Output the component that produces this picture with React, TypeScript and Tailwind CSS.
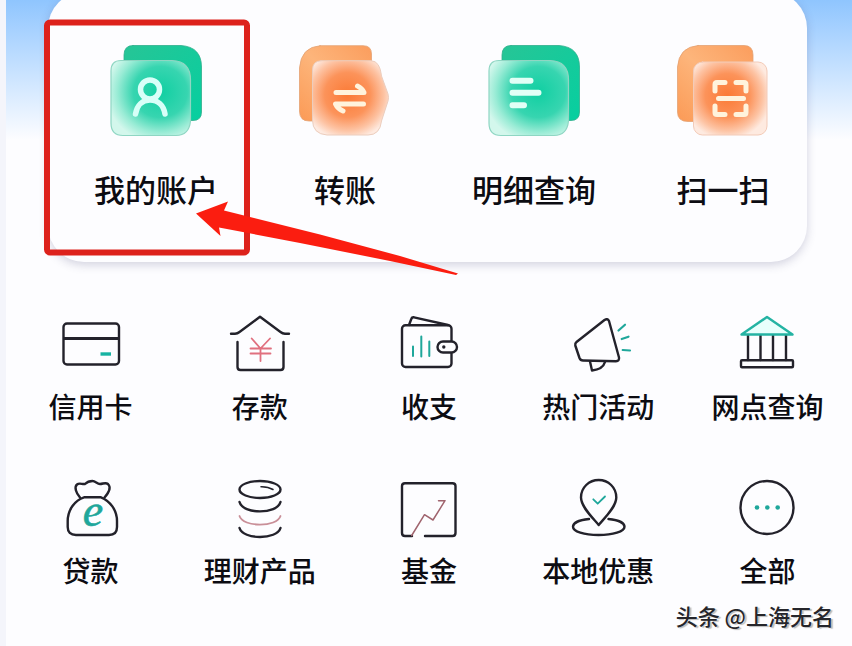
import type { ReactNode } from "react"

interface Entry {
  label: string
  icon: ReactNode
}

const INK = "#23222b"
const TEAL = "#1fa79b"
const PINK = "#e0707f"

function Gradients() {
  return (
    <svg className="absolute h-0 w-0" aria-hidden="true">
      <defs>
        <linearGradient id="greenBack" x1="0" y1="0" x2="1" y2="1">
          <stop offset="0" stopColor="#27c596" />
          <stop offset="1" stopColor="#06cfa0" />
        </linearGradient>
        <radialGradient id="greenGlass" cx="0.62" cy="0.42" r="0.68">
          <stop offset="0" stopColor="#10cfa2" />
          <stop offset="0.5" stopColor="#37d5b0" />
          <stop offset="0.8" stopColor="#9becd6" />
          <stop offset="1" stopColor="#d3f7ec" />
        </radialGradient>
        <linearGradient id="orangeBack" x1="0" y1="1" x2="1" y2="0">
          <stop offset="0" stopColor="#fb9a56" />
          <stop offset="0.5" stopColor="#fdb57b" />
          <stop offset="1" stopColor="#fb9d5d" />
        </linearGradient>
        <radialGradient id="orangeGlass" cx="0.46" cy="0.46" r="0.6">
          <stop offset="0" stopColor="#fb7a35" />
          <stop offset="0.5" stopColor="#fc935a" />
          <stop offset="0.8" stopColor="#fdc3a3" />
          <stop offset="1" stopColor="#feeae0" />
        </radialGradient>
      </defs>
    </svg>
  )
}

function TileIcon({ children }: { children: ReactNode }) {
  return (
    <svg
      viewBox="0 0 96 96"
      className="h-24 w-24"
      fill="none"
      strokeLinecap="round"
      strokeLinejoin="round"
      aria-hidden="true"
    >
      {children}
    </svg>
  )
}

function LineIcon({ children }: { children: ReactNode }) {
  return (
    <svg
      viewBox="0 0 64 64"
      className="h-16 w-16 overflow-visible"
      fill="none"
      stroke={INK}
      strokeWidth="2.4"
      strokeLinecap="round"
      strokeLinejoin="round"
      aria-hidden="true"
    >
      {children}
    </svg>
  )
}

function GreenTile({ children }: { children: ReactNode }) {
  return (
    <TileIcon>
      <path
        d="M25 2.5H73Q93.5 4 93.5 24V69Q93.5 77.5 85 77.5H25Q16 77.5 16 68V12Q16 2.5 25 2.5Z"
        fill="url(#greenBack)"
        stroke="#2fae8c"
        strokeWidth="0.8"
      />
      <path
        d="M13 17.5H64Q82.5 18 82.5 37V78Q81 92.5 68 92.5H15Q3 92.5 3 80V28Q3 17.5 13 17.5Z"
        fill="url(#greenGlass)"
        stroke="#8fd6c3"
        strokeWidth="1.2"
      />
      {children}
    </TileIcon>
  )
}

const services: Entry[] = [
  {
    label: "我的账户",
    icon: (
      <GreenTile>
        <g stroke="#d8fff8" strokeWidth="5.5">
          <circle cx="42" cy="46.5" r="9.5" />
          <path d="M27.5 71C29 62 34.5 57 42 57S55.5 62 57 71" />
        </g>
      </GreenTile>
    ),
  },
  {
    label: "转账",
    icon: (
      <TileIcon>
        <path
          d="M23 2.7H66Q74.5 2.7 74.5 11V78H12Q2.5 78 2.5 68V25Q4 4 23 2.7Z"
          fill="url(#orangeBack)"
          stroke="#e3a273"
          strokeWidth="0.8"
        />
        <path
          d="M24 17.7H74Q83 18 84.5 33L91 51Q92 54.5 91 58L84.5 78Q83 92 71 92H30Q15.5 91 15.5 77V27Q15.5 18 24 17.7Z"
          fill="url(#orangeGlass)"
          stroke="#eccdbd"
          strokeWidth="1"
        />
        <path
          d="M39 49.5H67Q65 45 60.5 43M66.500 61H38.500Q40.500 65.500 46 68"
          stroke="#fff3dc"
          strokeWidth="5"
        />
      </TileIcon>
    ),
  },
  {
    label: "明细查询",
    icon: (
      <GreenTile>
        <path
          d="M26.5 37.7H44.5M26.5 49.7H52.5M26.5 62.3H38"
          stroke="#e2fff6"
          strokeWidth="6"
        />
      </GreenTile>
    ),
  },
  {
    label: "扫一扫",
    icon: (
      <TileIcon>
        <path
          d="M23 2.5H69Q78 2.5 78 12V78.5H13Q2.5 78.5 2.5 69V24Q4 4 23 2.5Z"
          fill="url(#orangeBack)"
          stroke="#e3a273"
          strokeWidth="0.8"
        />
        <rect
          x="18.5"
          y="19"
          width="73.5"
          height="73"
          rx="9"
          fill="url(#orangeGlass)"
          stroke="#f3cbb8"
          strokeWidth="1"
        />
        <path
          d="M50 39.5H42Q40 39.5 40 41.5V48M61 39.5H69Q71 39.5 71 41.5V48M40 63V69.5Q40 71.5 42 71.5H50M71 63V69.5Q71 71.5 69 71.5H61M43.5 55.5H68.5"
          stroke="#fff3dc"
          strokeWidth="5"
        />
      </TileIcon>
    ),
  },
]

const products: Entry[] = [
  {
    label: "信用卡",
    icon: (
      <LineIcon>
        <rect x="4.5" y="11.5" width="55.5" height="41" rx="3.5" />
        <path d="M4.5 26.5H60" strokeWidth="3" strokeLinecap="butt" />
        <path d="M41.5 42H52" stroke="#17b3a3" strokeWidth="3.4" strokeLinecap="butt" />
      </LineIcon>
    ),
  },
  {
    label: "存款",
    icon: (
      <LineIcon>
        <path d="M3 21.7H7Q9.5 21.7 11.5 20L32 4.7L52.5 20Q54.5 21.7 57 21.7H61" />
        <path d="M9.5 30V55Q9.5 58 12.5 58H52.5Q55.5 58 55.5 55V30" />
        <path
          d="M23.7 26.5L32.5 36.5L42 26.5M22.5 36.5H43M22.5 41.5H42.5M32.5 36.5V49"
          stroke={PINK}
          strokeWidth="1.8"
        />
      </LineIcon>
    ),
  },
  {
    label: "收支",
    icon: (
      <LineIcon>
        <path d="M12 13L14.5 6.5Q15 5 17 5.3L51 13" />
        <rect x="5" y="13.3" width="49.5" height="41.7" rx="3.5" />
        <rect x="40.5" y="29.5" width="19.5" height="11" rx="5.5" fill="#fdfdff" />
        <circle cx="46.8" cy="35" r="1.7" fill={INK} stroke="none" />
        <path d="M16 34.5V44M24.3 24.5V44.5M32.3 29.5V44" stroke={TEAL} strokeWidth="2" />
      </LineIcon>
    ),
  },
  {
    label: "热门活动",
    icon: (
      <LineIcon>
        <path d="M10.5 30L38.5 8Q41.5 6 43 9L53 45.5Q53.5 49.3 50 49.3L17 48.5Q14.5 48.5 13.5 46L9.3 33.5Q8.8 31.3 10.5 30Z" />
        <path d="M24 49.5L26 58.5C31 58 37 57 39 50" />
        <path
          d="M52.5 18.5L59 12.7M55.7 27L62.5 24.7M56.7 38L64 38.5"
          stroke={TEAL}
          strokeWidth="2.2"
        />
      </LineIcon>
    ),
  },
  {
    label: "网点查询",
    icon: (
      <LineIcon>
        <path d="M13 23V48M25.5 23V48M38 23V48M51 23V48" />
        <rect x="6" y="48.3" width="52" height="7" rx="1" />
        <path d="M6.5 22.5L32 5L57.5 22.5Z" stroke="#24b3a3" fill="#e8fffc" />
      </LineIcon>
    ),
  },
  {
    label: "贷款",
    icon: (
      <LineIcon>
        <path d="M21 21.5C17 17 15 11 18 8.5C20.5 6.5 23 8.5 26 8C28.5 5.5 30.5 5 33.5 5C36.5 5 38 8 41 8C44 8 46.5 6 49 8C52.5 11.5 49 17.5 45.5 21.5" />
        <path d="M25 21.3H42C51 25 58 34 58 45V51Q58 59 50 59H17Q8.7 59 8.7 51V45C8.7 34 16 24 25 21.3Z" />
        <text
          x="34"
          y="50"
          textAnchor="middle"
          fill={TEAL}
          stroke={TEAL}
          strokeWidth="0.6"
          className="font-['Liberation_Serif',serif] text-[46px] italic"
        >
          e
        </text>
      </LineIcon>
    ),
  },
  {
    label: "理财产品",
    icon: (
      <LineIcon>
        <ellipse cx="32" cy="13.5" rx="20.5" ry="8.5" />
        <path d="M33 10.7Q40 10.5 45 13.5" strokeWidth="1.5" />
        <path d="M11.5 26C15 38.5 49 38.5 52.5 26M11.5 52C15 64 49 64 52.5 52" />
        <path d="M11.5 40C15 51.5 49 51.5 52.5 40" stroke="#c98f98" strokeWidth="1.8" />
      </LineIcon>
    ),
  },
  {
    label: "基金",
    icon: (
      <LineIcon>
        <path d="M15 60H8Q5 60 5 57V10Q5 7.3 8 7.3H55.5Q58.5 7.3 58.5 10V57Q58.5 60 55.5 60H28" />
        <path
          d="M14.7 59.5L27.5 38.7L36 44L48 24.7H41.5"
          stroke="#a0646e"
          strokeWidth="1.5"
        />
      </LineIcon>
    ),
  },
  {
    label: "本地优惠",
    icon: (
      <LineIcon>
        <path d="M23 43C13 44 7 47 7 50.7C7 55.5 18 59 32.5 59S58.5 55.5 58.5 50.7C58.5 47 52.5 44 42.5 43" />
        <path d="M32.7 49C27 42 15 31 15 21.5C15 11.5 23 4 32.7 4S50.3 11.5 50.3 21.5C50.3 31 38.5 42 32.7 49Z" />
        <path d="M27.3 23.3L31.7 27.7L39 20.5" stroke={TEAL} strokeWidth="1.8" />
      </LineIcon>
    ),
  },
  {
    label: "全部",
    icon: (
      <LineIcon>
        <circle cx="32" cy="31.5" r="26.5" />
        <g fill={TEAL} stroke="none">
          <circle cx="22" cy="31.5" r="2.3" />
          <circle cx="32.3" cy="31.5" r="2.3" />
          <circle cx="42.7" cy="31.5" r="2.3" />
        </g>
      </LineIcon>
    ),
  },
]

// Red frame and arrow pointing at the first service
function Callout() {
  return (
    <svg
      width="480"
      height="290"
      viewBox="6 0 480 290"
      className="pointer-events-none absolute left-0 top-0"
      aria-hidden="true"
    >
      <rect x="47" y="22.5" width="200" height="230" rx="3" fill="none" stroke="#dd221c" strokeWidth="6" />
      <path
        d="M196 213.5L228 201.5L224 210.5L320 234.5L400 256L458 273.5L456 275L390 261L300 243L219 227.5L220.5 236Z"
        fill="#fb1d10"
      />
    </svg>
  )
}

export default function App() {
  return (
    <main className="relative overflow-hidden border-l-6 border-[#f4f5fb] bg-[#fdfdff] bg-linear-to-b from-[#8fc5fe] to-[#fdfdff] to-[140px] font-['Noto_Sans_CJK_SC',sans-serif] text-[#0c0c12]">
      <Gradients />
      <section className="ml-[42px] mr-[45px] -mt-2 flex justify-between rounded-[36px] bg-[#fdfdff] pb-[53px] pl-[46px] pr-[22px] pt-[51px] shadow-[0_3px_10px_rgba(60,60,110,0.22)]">
        {services.map((item) => (
          <button key={item.label} type="button" className="flex w-[124px] flex-col items-center gap-[30px]">
            {item.icon}
            <span className="whitespace-nowrap text-[31px] font-medium leading-10">{item.label}</span>
          </button>
        ))}
      </section>

      <section className="mt-[50px] grid grid-cols-5 gap-y-[50px]">
        {products.map((item) => (
          <button key={item.label} type="button" className="flex flex-col items-center gap-[10px]">
            {item.icon}
            <span className="whitespace-nowrap text-[28px] font-medium leading-10">{item.label}</span>
          </button>
        ))}
      </section>

      <footer className="flex justify-end pb-4 pr-[18px] pt-[10px]">
        <p className="text-[22px] font-medium leading-[30px] text-[#26262b] [text-shadow:-1px_-1px_0_#fff,2px_1px_1px_#bbb]">
          头条 @上海无名
        </p>
      </footer>
      <Callout />
    </main>
  )
}
